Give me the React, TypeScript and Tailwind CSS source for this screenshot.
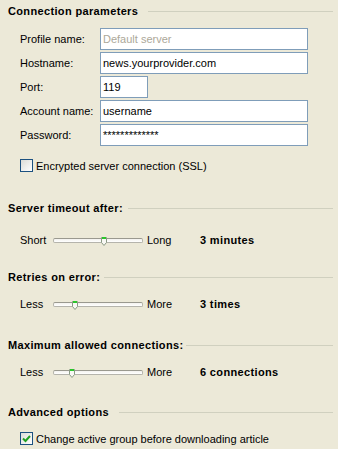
import React from 'react';

const SectionHeading = ({ title, gap, className }: { title: string; gap: string; className: string }) => (
  <div className={`flex items-center h-[14px] ${className}`}>
    <span className="font-bold tracking-[0.35px] leading-[14px] whitespace-nowrap">{title}</span>
    <div className={`flex-1 h-px bg-[#D0D0BF] ${gap}`} />
  </div>
);

const FieldRow = ({
  label,
  value,
  width = 'w-[208px]',
  muted = false,
}: {
  label: string;
  value: string;
  width?: string;
  muted?: boolean;
}) => (
  <div className="flex items-center h-[22px] pl-3">
    <span className="w-[80px] leading-[14px]">{label}</span>
    <div
      className={`${width} h-[22px] border border-[#7F9DB9] bg-white flex items-center pl-[2px] leading-[14px] ${
        muted ? 'text-[#ACA899]' : 'text-black'
      }`}
    >
      {value}
    </div>
  </div>
);

const Checkbox = ({ checked, label, className }: { checked: boolean; label: string; className: string }) => (
  <div className={`flex items-center h-[13px] pl-3 ${className}`}>
    <div className="w-[13px] h-[13px] border border-[#1C5180] bg-gradient-to-br from-[#DCDCD7] to-white flex items-center justify-center">
      {checked && (
        <svg width="9" height="9" viewBox="0 0 9 9">
          <path d="M1 4.5 L3.5 7 L8 2" fill="none" stroke="#21A121" strokeWidth="2" />
        </svg>
      )}
    </div>
    <span className="ml-[3px] leading-[14px] whitespace-nowrap">{label}</span>
  </div>
);

const SliderRow = ({
  left,
  right,
  value,
  thumb,
  className,
}: {
  left: string;
  right: string;
  value: string;
  thumb: number;
  className: string;
}) => (
  <div className={`flex items-center h-[14px] pl-3 ${className}`}>
    <span className="w-[33px] leading-[14px]">{left}</span>
    <div className="relative w-[90px] h-[5px] rounded-[2px] border border-[#B5B4AC] border-t-[#9A998F] bg-gradient-to-b from-[#F3F2EE] to-white">
      <svg
        className="absolute -top-[2px]"
        style={{ left: thumb - 3 }}
        width="6"
        height="9"
        viewBox="0 0 6 9"
      >
        <path d="M0.5 0.5 H5.5 V5.5 L3 8.5 L0.5 5.5 Z" fill="#F8F8F4" stroke="#8A9A84" strokeWidth="1" />
        <rect x="1" y="0" width="4" height="2" fill="#2BC52B" />
      </svg>
    </div>
    <span className="ml-[4px] w-[53px] leading-[14px]">{right}</span>
    <span className="font-bold tracking-[0.35px] leading-[14px] whitespace-nowrap">{value}</span>
  </div>
);

export default function App() {
  return (
    <div
      className="w-[338px] h-[449px] overflow-hidden bg-[#ECE9D8] text-[11px] text-black pl-2 pr-[5px] flex flex-col"
      style={{ fontFamily: '"Liberation Sans", Arial, sans-serif' }}
    >
      <SectionHeading title="Connection parameters" gap="ml-[10px]" className="mt-[4px]" />

      <div className="flex flex-col gap-[2px] mt-[10px]">
        <FieldRow label="Profile name:" value="Default server" muted />
        <FieldRow label="Hostname:" value="news.yourprovider.com" />
        <FieldRow label="Port:" value="119" width="w-[48px]" />
        <FieldRow label="Account name:" value="username" />
        <FieldRow label="Password:" value="*************" />
      </div>

      <Checkbox checked={false} label="Encrypted server connection (SSL)" className="mt-[13px]" />

      <SectionHeading title="Server timeout after:" gap="ml-[5px]" className="mt-[29px]" />
      <SliderRow left="Short" right="Long" value="3 minutes" thumb={50} className="mt-[18px]" />

      <SectionHeading title="Retries on error:" gap="ml-[4px]" className="mt-[23px]" />
      <SliderRow left="Less" right="More" value="3 times" thumb={21} className="mt-[13px]" />

      <SectionHeading title="Maximum allowed connections:" gap="ml-[3px]" className="mt-[27px]" />
      <SliderRow left="Less" right="More" value="6 connections" thumb={18} className="mt-[13px]" />

      <SectionHeading title="Advanced options" gap="ml-[10px]" className="mt-[26px]" />
      <Checkbox checked label="Change active group before downloading article" className="mt-[13px]" />
    </div>
  );
}
